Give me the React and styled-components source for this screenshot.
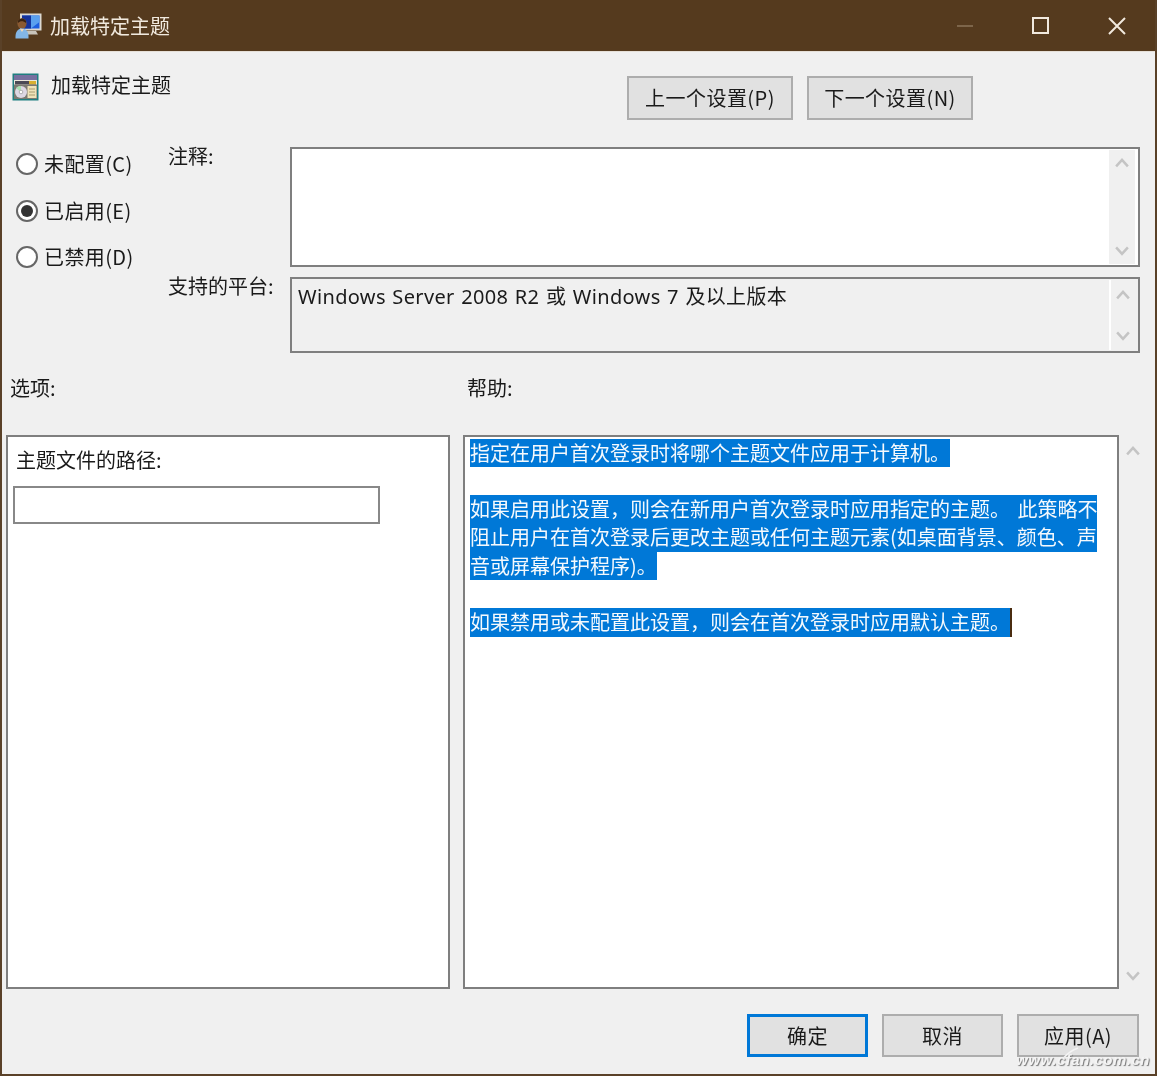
import React from 'react';
import styled, { createGlobalStyle } from 'styled-components';

const Global = createGlobalStyle`
  html, body { margin: 0; padding: 0; background: #f0f0f0; }
  * { box-sizing: border-box; }
  body { font-family: "Noto Sans CJK SC", "Noto Sans", sans-serif; color: #1a1a1a; }
`;

const Window = styled.div`
  position: relative;
  width: 1157px;
  height: 1076px;
  display: flex;
  flex-direction: column;
  background: #f0f0f0;
  border: 2px solid #5a4128;
  border-top: 0;
  overflow: hidden;
  filter: blur(0.35px);
`;
const TitleBar = styled.header`
  height: 52px;
  flex: none;
  margin: 0 -2px;
  display: flex;
  align-items: center;
  background: #553a1e;
  border-bottom: 1px solid #e6e0d8;
  padding-left: 15px;
  color: #f1e9de;
`;
const TitleText = styled.span`
  font-size: 20px;
  line-height: 28px;
  margin-left: 8px;
`;
const WindowControls = styled.div`
  margin-left: auto;
  display: flex;
  margin-right: 1px;
`;
const ControlButton = styled.div`
  width: ${p => p.$w}px;
  height: 51px;
  display: flex;
  align-items: center;
  justify-content: center;
`;
const Content = styled.main`
  flex: 1;
  display: flex;
  flex-direction: column;
  padding: 0 0 0 4px;
`;
const HeaderRow = styled.div`
  height: 89px;
  display: flex;
  flex: none;
`;
const PolicyHead = styled.div`
  display: flex;
  align-items: flex-start;
  padding: 21px 0 0 6px;
  gap: 12px;
`;
const PolicyName = styled.span`
  font-size: 20px;
  line-height: 28px;
  margin-top: -2px;
`;
const NavButtons = styled.div`
  margin-left: auto;
  margin-right: 182px;
  margin-top: 24px;
  display: flex;
  gap: 14px;
`;
const Button = styled.div`
  width: ${p => p.$w}px;
  height: ${p => p.$h}px;
  display: flex;
  align-items: center;
  justify-content: center;
  background: #e1e1e1;
  border: ${p => (p.$primary ? '3px solid #0078d7' : '2px solid #adadad')};
  font-size: 20px;
  line-height: 28px;
  letter-spacing: 0.45px;
`;
const ConfigRow = styled.section`
  display: flex;
  flex: none;
`;
const RadioColumn = styled.div`
  width: 162px;
  padding-left: 10px;
  flex: none;
`;
const RadioRow = styled.div`
  height: 46.5px;
  display: flex;
  align-items: center;
  gap: 6px;
  font-size: 20px;
  line-height: 28px;
  letter-spacing: 0.4px;
`;
const RadioMark = styled.span`
  width: 22px;
  height: 22px;
  flex: none;
  border-radius: 50%;
  border: 2px solid #666;
  background: #fff;
  display: flex;
  align-items: center;
  justify-content: center;
  &::after {
    content: '';
    width: 12px;
    height: 12px;
    border-radius: 50%;
    background: ${p => (p.$on ? '#333' : 'transparent')};
  }
`;
const FieldGrid = styled.div`
  display: grid;
  grid-template-columns: 122px 850px;
  grid-template-rows: 120px 76px;
  row-gap: 10px;
  padding-top: 6px;
`;
const FieldLabel = styled.div`
  font-size: 20px;
  line-height: 28px;
  margin-top: -5px;
`;
const Field = styled.div`
  border: 2px solid #7f7f7f;
  background: ${p => (p.$filled ? '#f0f0f0' : '#fff')};
  display: flex;
  justify-content: space-between;
  padding: 1px 3px 1px 0;
`;
const FieldText = styled.div`
  padding: 3px 0 0 6px;
  font-family: "Noto Sans", "Noto Sans CJK SC", sans-serif;
  font-size: 20px;
  line-height: 28px;
  letter-spacing: 0.34px;
  word-spacing: 1px;
  white-space: nowrap;
`;
const Scrollbar = styled.div`
  width: 26px;
  flex: none;
  background: #f0f0f0;
  display: flex;
  flex-direction: column;
  justify-content: space-between;
  align-items: center;
  padding: ${p => p.$pad || '8px 0'};
  ${p => p.$divided && 'border-left: 2px solid #fff;'}
`;
const LabelsRow = styled.div`
  height: 82px;
  flex: none;
  display: flex;
  padding-top: 21px;
  font-size: 20px;
  line-height: 28px;
`;
const LeftLabel = styled.div`
  width: 457px;
  padding-left: 4px;
`;
const RightLabel = styled.div`
  padding-left: 4px;
`;
const Panels = styled.section`
  height: 554px;
  flex: none;
  display: flex;
`;
const OptionsPanel = styled.div`
  width: 444px;
  margin-right: 13px;
  flex: none;
  border: 2px solid #7f7f7f;
  background: #fff;
  padding: 9px 5px;
`;
const OptionLabel = styled.div`
  font-size: 20px;
  line-height: 28px;
  padding-left: 3px;
`;
const PathInput = styled.div`
  width: 367px;
  height: 38px;
  margin-top: 12px;
  border: 2px solid #888;
  background: #fff;
`;
const HelpPanel = styled.div`
  width: 656px;
  flex: none;
  border: 2px solid #7f7f7f;
  background: #fff;
  padding: 1.5px 5px;
`;
const HelpLine = styled.div`
  width: fit-content;
  height: 28.3px;
  font-size: 20px;
  line-height: 28px;
  white-space: nowrap;
  word-spacing: 3px;
  background: ${p => (p.$blank ? 'transparent' : '#0078d7')};
  color: #f4f9fd;
  ${p => p.$caret && 'border-right: 2px solid #4a2c10;'}
`;
const HelpScroll = styled.div`
  width: 28px;
  flex: none;
  display: flex;
  flex-direction: column;
  justify-content: space-between;
  align-items: center;
  padding: 11px 0 8px;
`;
const Footer = styled.footer`
  display: flex;
  justify-content: flex-end;
  gap: 14px;
  padding: 25px 16px 0 0;
`;
const Watermark = styled.div`
  position: absolute;
  right: 5px;
  bottom: 5px;
  font-family: "Liberation Sans", sans-serif;
  font-size: 15px;
  line-height: 18px;
  font-weight: 700;
  font-style: italic;
  letter-spacing: 0.5px;
  color: #f4f4f4;
  text-shadow: 1px 1px 1px #777;
`;
const WatermarkSwoosh = styled.svg`
  position: absolute;
  right: 75px;
  bottom: 5px;
`;

const Chevron = ({ up, size = 14 }) => (
  <svg width={size} height={size * 0.7} viewBox="0 0 14 10" fill="none" stroke="#c4c4c4" strokeWidth="2.6">
    <path d={up ? 'M1 8.5 L7 2 L13 8.5' : 'M1 1.5 L7 8 L13 1.5'} />
  </svg>
);

const ComputerUserIcon = () => (
  <svg width="27" height="26" viewBox="0 0 27 26">
    <rect x="5" y="0.5" width="21.5" height="17" fill="#dcd9d2" />
    <rect x="7" y="2.5" width="17.5" height="13" fill="#1d5fe0" />
    <path d="M7 2.5 H16 V15.5 H7 Z" fill="#14339c" />
    <path d="M16 2.5 H24.5 V9 L16 15.5 Z" fill="#5aa0ee" />
    <path d="M12 18 H21 L23 21.5 H11 Z" fill="#c9c4bb" />
    <ellipse cx="7" cy="10.5" rx="4.6" ry="5.2" fill="#8a5a32" />
    <path d="M3 8 C4 4.5 9.5 4.5 11 8 L11 10 C8 7.5 5 8 3 10 Z" fill="#3a2412" />
    <path d="M0.5 25.5 C0 18 3.5 15.5 7 15.5 C10.5 15.5 14 18 13.5 25.5 Z" fill="#83b6e6" />
    <path d="M5 16 L7 19 L9 16 Z" fill="#f0d8b8" />
  </svg>
);

const PolicyIcon = () => (
  <svg width="27" height="28" viewBox="0 0 27 28">
    <rect x="0.5" y="0.5" width="26" height="27" fill="#1f7f80" />
    <rect x="2" y="2" width="23" height="24" fill="#ece8dc" />
    <rect x="2" y="2" width="23" height="5" fill="#77709f" />
    <rect x="3" y="8" width="21" height="3.5" fill="#4b4a55" />
    <rect x="17" y="8" width="7" height="3.5" fill="#d8b030" />
    <rect x="2" y="11.5" width="23" height="14.5" fill="#7c7a72" />
    <circle cx="9" cy="19" r="6" fill="#ddd8e4" />
    <path d="M9 19 L4 15 A6 6 0 0 1 9 13 Z" fill="#a8e0b0" />
    <circle cx="9" cy="19" r="1.8" fill="#fff" stroke="#888" strokeWidth="0.6" />
    <rect x="15.5" y="13" width="9" height="12" fill="#efe2b8" />
    <path d="M17 16h6M17 19h6M17 22h6" stroke="#a89c70" strokeWidth="1" />
  </svg>
);

const Minimize = () => (
  <svg width="18" height="4" viewBox="0 0 18 4"><path d="M1 2 H17" stroke="#7d654a" strokeWidth="2" /></svg>
);
const Maximize = () => (
  <svg width="17" height="17" viewBox="0 0 17 17" fill="none"><rect x="1" y="1" width="15" height="15" stroke="#f1e9de" strokeWidth="2" /></svg>
);
const Close = () => (
  <svg width="18" height="18" viewBox="0 0 18 18" fill="none"><path d="M1 1 L17 17 M17 1 L1 17" stroke="#f1e9de" strokeWidth="2" /></svg>
);

const radios = [
  { label: '未配置(C)' },
  { label: '已启用(E)', on: true },
  { label: '已禁用(D)' },
];

const help = [
  { t: '指定在用户首次登录时将哪个主题文件应用于计算机。' },
  { blank: true },
  { t: '如果启用此设置，则会在新用户首次登录时应用指定的主题。 此策略不' },
  { t: '阻止用户在首次登录后更改主题或任何主题元素(如桌面背景、颜色、声' },
  { t: '音或屏幕保护程序)。' },
  { blank: true },
  { t: '如果禁用或未配置此设置，则会在首次登录时应用默认主题。', caret: true },
];

export default function App() {
  return (
    <Window>
      <Global />
      <TitleBar>
        <ComputerUserIcon />
        <TitleText>加载特定主题</TitleText>
        <WindowControls>
          <ControlButton $w={74}><Minimize /></ControlButton>
          <ControlButton $w={76}><Maximize /></ControlButton>
          <ControlButton $w={78}><Close /></ControlButton>
        </WindowControls>
      </TitleBar>
      <Content>
        <HeaderRow>
          <PolicyHead>
            <PolicyIcon />
            <PolicyName>加载特定主题</PolicyName>
          </PolicyHead>
          <NavButtons>
            <Button $w={166} $h={44}>上一个设置(P)</Button>
            <Button $w={166} $h={44}>下一个设置(N)</Button>
          </NavButtons>
        </HeaderRow>
        <ConfigRow>
          <RadioColumn>
            {radios.map(r => (
              <RadioRow key={r.label}>
                <RadioMark $on={r.on} />
                {r.label}
              </RadioRow>
            ))}
          </RadioColumn>
          <FieldGrid>
            <FieldLabel>注释:</FieldLabel>
            <Field>
              <span />
              <Scrollbar><Chevron up /><Chevron /></Scrollbar>
            </Field>
            <FieldLabel>支持的平台:</FieldLabel>
            <Field $filled>
              <FieldText>Windows Server 2008 R2 或 Windows 7 及以上版本</FieldText>
              <Scrollbar $divided $pad="10px 0 9px"><Chevron up /><Chevron /></Scrollbar>
            </Field>
          </FieldGrid>
        </ConfigRow>
        <LabelsRow>
          <LeftLabel>选项:</LeftLabel>
          <RightLabel>帮助:</RightLabel>
        </LabelsRow>
        <Panels>
          <OptionsPanel>
            <OptionLabel>主题文件的路径:</OptionLabel>
            <PathInput />
          </OptionsPanel>
          <HelpPanel>
            {help.map((l, i) => (
              <HelpLine key={i} $blank={l.blank} $caret={l.caret}>{l.t}</HelpLine>
            ))}
          </HelpPanel>
          <HelpScroll><Chevron up /><Chevron /></HelpScroll>
        </Panels>
        <Footer>
          <Button $w={121} $h={43} $primary>确定</Button>
          <Button $w={121} $h={43}>取消</Button>
          <Button $w={122} $h={43}>应用(A)</Button>
        </Footer>
      </Content>
      <WatermarkSwoosh width="24" height="24" viewBox="0 0 24 24" fill="none">
        <path d="M2 23 C5 16 9 8 22 3" stroke="#f4f4f4" strokeWidth="1.6" />
      </WatermarkSwoosh>
      <Watermark>www.cfan.com.cn</Watermark>
    </Window>
  );
}
